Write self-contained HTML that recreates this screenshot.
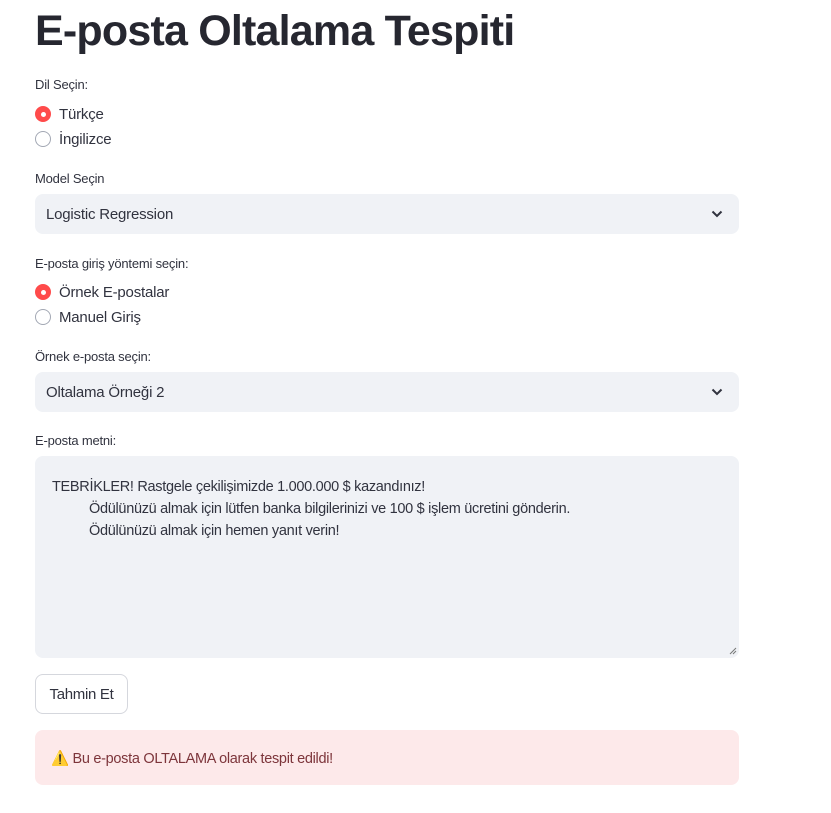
<!DOCTYPE html>
<html><head><meta charset="utf-8"><style>
body{margin:0;background:#fff;font-family:"Liberation Sans",sans-serif;color:#31333f;width:831px;height:813px;overflow:hidden;position:relative}
.a{position:absolute;white-space:nowrap}
h1{position:absolute;left:35px;top:7px;margin:0;font-size:43px;font-weight:bold;letter-spacing:-0.8px;color:#262730}
.lbl{font-size:13px;letter-spacing:-0.2px}
.rt{font-size:15px;letter-spacing:-0.2px}
.rad{position:absolute;border-radius:50%;border:1px solid #a3a8b4;background:#fff;box-sizing:border-box;width:16px;height:16px}
.rad.on{background:#ff4b4b;border-color:#ff4b4b}
.rad.on::after{content:"";position:absolute;left:4.5px;top:4.5px;width:5px;height:5px;border-radius:50%;background:#fff}
.sel{position:absolute;left:35px;width:704px;height:40px;background:#f0f2f6;border-radius:8px}
.sel span{position:absolute;left:11px;top:12px;font-size:15px;letter-spacing:-0.2px}
.sel svg{position:absolute;right:16px;top:15px}
</style></head><body>
<h1>E-posta Oltalama Tespiti</h1>
<div class="a lbl" style="left:35px;top:77px">Dil Seçin:</div>
<div class="rad on" style="left:35px;top:106px"></div><div class="a rt" style="left:59px;top:106px">Türkçe</div>
<div class="rad" style="left:35px;top:131px"></div><div class="a rt" style="left:59px;top:131px">İngilizce</div>
<div class="a lbl" style="left:35px;top:171px">Model Seçin</div>
<div class="sel" style="top:194px"><span>Logistic Regression</span><svg width="12" height="10" viewBox="0 0 12 10"><path d="M1.5 2.5L6 7 10.5 2.5" stroke="#31333f" stroke-width="2" fill="none"/></svg></div>
<div class="a lbl" style="left:35px;top:256px">E-posta giriş yöntemi seçin:</div>
<div class="rad on" style="left:35px;top:284px"></div><div class="a rt" style="left:59px;top:284px">Örnek E-postalar</div>
<div class="rad" style="left:35px;top:309px"></div><div class="a rt" style="left:59px;top:309px">Manuel Giriş</div>
<div class="a lbl" style="left:35px;top:349px">Örnek e-posta seçin:</div>
<div class="sel" style="top:372px"><span>Oltalama Örneği 2</span><svg width="12" height="10" viewBox="0 0 12 10"><path d="M1.5 2.5L6 7 10.5 2.5" stroke="#31333f" stroke-width="2" fill="none"/></svg></div>
<div class="a lbl" style="left:35px;top:433px">E-posta metni:</div>
<div class="sel" style="top:456px;height:202px"></div>
<div class="a" style="left:52px;top:476px;font-size:14.5px;letter-spacing:-0.3px;line-height:22px">TEBRİKLER! Rastgele çekilişimizde 1.000.000 $ kazandınız!<br><span style="padding-left:37px">Ödülünüzü almak için lütfen banka bilgilerinizi ve 100 $ işlem ücretini gönderin.</span><br><span style="padding-left:37px">Ödülünüzü almak için hemen yanıt verin!</span></div>
<svg class="a" style="left:729px;top:647px" width="8" height="8"><path d="M1 7L7 1M4 7L7 4" stroke="#777" stroke-width="1"/></svg>
<div class="a" style="left:35px;top:674px;width:93px;height:40px;border:1px solid #d5d7dd;border-radius:8px;box-sizing:border-box;font-size:15px;letter-spacing:-0.3px;text-align:center;line-height:40px">Tahmin Et</div>
<div class="a" style="left:35px;top:730px;width:704px;height:55px;background:#fde9ea;border-radius:8px"></div>
<div class="a" style="left:51px;top:750px;font-size:14.5px;letter-spacing:-0.3px;color:#7d353b">⚠️ Bu e-posta OLTALAMA olarak tespit edildi!</div>
</body></html>
